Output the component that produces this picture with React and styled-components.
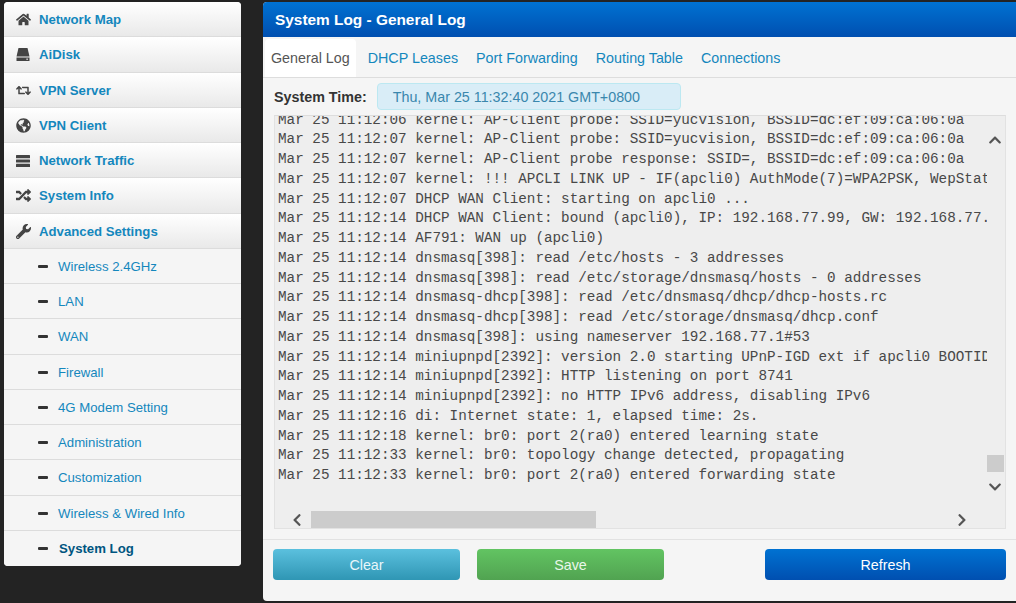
import styled, { createGlobalStyle } from 'styled-components';
import {
  FaHome, FaRetweet, FaGlobeAmericas, FaRandom, FaWrench,
  FaChevronUp, FaChevronDown, FaChevronLeft, FaChevronRight,
} from 'react-icons/fa';

const GlobalStyle = createGlobalStyle`
  html, body { margin: 0; padding: 0; background: #232323; }
  body { font-family: "Liberation Sans", Arial, sans-serif; font-size: 14.3px; }
`;

const Page = styled.div`
  width: 1016px;
  height: 603px;
  box-sizing: border-box;
  padding: 2px 0 2px 4px;
  display: flex;
  align-items: flex-start;
  gap: 22px;
  overflow: hidden;
`;

const Sidebar = styled.nav`
  width: 237px;
  flex: none;
  display: flex;
  flex-direction: column;
  border-radius: 4px;
  overflow: hidden;
  background: #f5f5f5;
`;

const NavRow = styled.div`
  height: 35.25px;
  box-sizing: border-box;
  display: flex;
  align-items: center;
  padding: 1px 0 0 ${({ $sub }) => ($sub ? '34px' : '11px')};
  gap: ${({ $sub, $active }) => ($sub ? ($active ? '5px' : '4px') : '8px')};
  border-bottom: 1px solid #dcdcdc;
  background: ${({ $sub }) => ($sub ? '#f5f5f5' : 'linear-gradient(#ffffff, #e9e9e9)')};
  color: ${({ $active }) => ($active ? '#005580' : '#1487bd')};
  font-size: 13.2px;
  font-weight: ${({ $sub, $active }) => (!$sub || $active ? 'bold' : 'normal')};
  &:last-child { border-bottom: 0; }
`;

const NavIcon = styled.span`
  width: 16px;
  flex: none;
  display: flex;
  justify-content: center;
  color: #444;
  font-size: 15px;
`;

const Dash = styled.span`
  width: 10px;
  height: 3px;
  margin: 0 6px 0 0;
  background: #333;
  border-radius: 1px;
`;

const Main = styled.main`
  width: 753px;
  height: 599px;
  flex: none;
  display: flex;
  flex-direction: column;
  background: #f5f5f5;
  border-radius: 4px 0 0 4px;
  overflow: hidden;
`;

const Header = styled.header`
  height: 35px;
  flex: none;
  display: flex;
  align-items: center;
  padding-left: 12px;
  background: linear-gradient(#0072d2, #004fb0);
  color: #fff;
  font-size: 15.4px;
  font-weight: bold;
`;

const Tabs = styled.div`
  height: 41px;
  flex: none;
  box-sizing: border-box;
  display: flex;
  align-items: flex-end;
  padding: 2px 0 0 2px;
  border-bottom: 1px solid #ddd;
`;

const Tab = styled.div`
  height: 38px;
  box-sizing: border-box;
  padding: 0 ${({ $active }) => ($active ? '6px' : '9px')};
  margin-right: ${({ $active }) => ($active ? '3px' : '0')};
  display: flex;
  align-items: center;
  border-radius: 4px 4px 0 0;
  background: ${({ $active }) => ($active ? '#fff' : 'transparent')};
  color: ${({ $active }) => ($active ? '#555' : '#1487bd')};
`;

const TimeRow = styled.div`
  flex: none;
  height: 37px;
  display: flex;
  align-items: center;
  padding: 0 0 0 11px;
  gap: 10px;
  color: #333;
  font-weight: bold;
`;

const TimeBox = styled.div`
  width: 304px;
  height: 27px;
  box-sizing: border-box;
  display: flex;
  align-items: center;
  padding-left: 15px;
  border: 1px solid #bce8f1;
  border-radius: 4px;
  background: #d9edf7;
  color: #3a87ad;
  font-weight: normal;
`;

const LogBox = styled.div`
  position: relative;
  height: 414px;
  flex: none;
  box-sizing: border-box;
  margin: 0 10px 0 11px;
  padding-left: 3px;
  border: 1px solid #e2e2e2;
  border-top-color: #ddd;
  background: #eee;
  overflow: hidden;
`;

const LogText = styled.pre`
  width: 709px;
  margin: -5.5px 0 0;
  overflow: hidden;
  font-family: "Liberation Mono", "Courier New", monospace;
  font-size: 14.3px;
  line-height: 19.75px;
  color: #484848;
`;

const ScrollArrow = styled.span`
  position: absolute;
  left: ${({ $x }) => $x}px;
  top: ${({ $y }) => $y}px;
  display: flex;
  color: #555;
  font-size: 14px;
`;

const ScrollThumb = styled.div`
  position: absolute;
  left: ${({ $x }) => $x}px;
  top: ${({ $y }) => $y}px;
  width: ${({ $w }) => $w}px;
  height: 17px;
  background: #ccc;
`;

const Footer = styled.footer`
  flex: none;
  margin-top: 10px;
  padding: 9px 10px 0;
  border-top: 1px solid #e2e2e2;
  display: flex;
  gap: 17px;
`;

const colors = {
  info: ['#5bc0de', '#2f96b4', '#e8f6fa'],
  success: ['#62c462', '#51a351', '#eaf7ea'],
  primary: ['#0072d2', '#004fb0', '#fff'],
};

const Button = styled.div`
  width: ${({ $w }) => $w}px;
  height: 31px;
  margin-left: ${({ $push }) => ($push ? 'auto' : '0')};
  display: flex;
  align-items: center;
  justify-content: center;
  border-radius: 4px;
  background: linear-gradient(${({ $kind }) => colors[$kind][0]}, ${({ $kind }) => colors[$kind][1]});
  color: ${({ $kind }) => colors[$kind][2]};
`;

const StackIcon = () => (
  <svg width="14" height="12" viewBox="0 0 14 12" fill="currentColor">
    <rect x="0" y="0" width="14" height="3.2" rx="0.5" />
    <rect x="0" y="4.4" width="14" height="3.2" rx="0.5" />
    <rect x="0" y="8.8" width="14" height="3.2" rx="0.5" />
  </svg>
);

const DiskIcon = () => (
  <svg width="14" height="13" viewBox="0 0 14 13" fill="currentColor">
    <path d="M2.5 0h9L13.5 8.5h-13z" />
    <path d="M0.5 9.5h13V13h-13zM10.5 10.5v1.5h1.2v-1.5z" fillRule="evenodd" />
  </svg>
);

const topItems = [
  ['Network Map', <FaHome key="a" />],
  ['AiDisk', <DiskIcon key="b" />],
  ['VPN Server', <FaRetweet key="c" />],
  ['VPN Client', <FaGlobeAmericas key="d" />],
  ['Network Traffic', <StackIcon key="e" />],
  ['System Info', <FaRandom key="f" />],
  ['Advanced Settings', <FaWrench key="g" />],
];

const subItems = [
  'Wireless 2.4GHz', 'LAN', 'WAN', 'Firewall', '4G Modem Setting',
  'Administration', 'Customization', 'Wireless & Wired Info', 'System Log',
];

const tabs = ['General Log', 'DHCP Leases', 'Port Forwarding', 'Routing Table', 'Connections'];

const log = `Mar 25 11:12:06 kernel: AP-Client probe: SSID=yucvision, BSSID=dc:ef:09:ca:06:0a
Mar 25 11:12:07 kernel: AP-Client probe: SSID=yucvision, BSSID=dc:ef:09:ca:06:0a
Mar 25 11:12:07 kernel: AP-Client probe response: SSID=, BSSID=dc:ef:09:ca:06:0a
Mar 25 11:12:07 kernel: !!! APCLI LINK UP - IF(apcli0) AuthMode(7)=WPA2PSK, WepStatus(6)
Mar 25 11:12:07 DHCP WAN Client: starting on apcli0 ...
Mar 25 11:12:14 DHCP WAN Client: bound (apcli0), IP: 192.168.77.99, GW: 192.168.77.1
Mar 25 11:12:14 AF791: WAN up (apcli0)
Mar 25 11:12:14 dnsmasq[398]: read /etc/hosts - 3 addresses
Mar 25 11:12:14 dnsmasq[398]: read /etc/storage/dnsmasq/hosts - 0 addresses
Mar 25 11:12:14 dnsmasq-dhcp[398]: read /etc/dnsmasq/dhcp/dhcp-hosts.rc
Mar 25 11:12:14 dnsmasq-dhcp[398]: read /etc/storage/dnsmasq/dhcp.conf
Mar 25 11:12:14 dnsmasq[398]: using nameserver 192.168.77.1#53
Mar 25 11:12:14 miniupnpd[2392]: version 2.0 starting UPnP-IGD ext if apcli0 BOOTID=1
Mar 25 11:12:14 miniupnpd[2392]: HTTP listening on port 8741
Mar 25 11:12:14 miniupnpd[2392]: no HTTP IPv6 address, disabling IPv6
Mar 25 11:12:16 di: Internet state: 1, elapsed time: 2s.
Mar 25 11:12:18 kernel: br0: port 2(ra0) entered learning state
Mar 25 11:12:33 kernel: br0: topology change detected, propagating
Mar 25 11:12:33 kernel: br0: port 2(ra0) entered forwarding state`;

const App = () => (
  <Page>
    <GlobalStyle />
    <Sidebar>
      {topItems.map(([label, icon]) => (
        <NavRow key={label}>
          <NavIcon>{icon}</NavIcon>
          {label}
        </NavRow>
      ))}
      {subItems.map((label) => (
        <NavRow key={label} $sub $active={label === 'System Log'}>
          <Dash />
          {label}
        </NavRow>
      ))}
    </Sidebar>
    <Main>
      <Header>System Log - General Log</Header>
      <Tabs>
        {tabs.map((t) => (
          <Tab key={t} $active={t === 'General Log'}>{t}</Tab>
        ))}
      </Tabs>
      <TimeRow>
        System Time:
        <TimeBox>Thu, Mar 25 11:32:40 2021 GMT+0800</TimeBox>
      </TimeRow>
      <LogBox>
        <LogText>{log}</LogText>
        <ScrollArrow $x={713} $y={17}><FaChevronUp /></ScrollArrow>
        <ScrollThumb $x={712} $y={339} $w={17} />
        <ScrollArrow $x={713} $y={364}><FaChevronDown /></ScrollArrow>
        <ScrollArrow $x={15} $y={397}><FaChevronLeft /></ScrollArrow>
        <ScrollThumb $x={36} $y={395} $w={285} />
        <ScrollArrow $x={680} $y={397}><FaChevronRight /></ScrollArrow>
      </LogBox>
      <Footer>
        <Button $kind="info" $w={187}>Clear</Button>
        <Button $kind="success" $w={187}>Save</Button>
        <Button $kind="primary" $w={241} $push>Refresh</Button>
      </Footer>
    </Main>
  </Page>
);

export default App;
